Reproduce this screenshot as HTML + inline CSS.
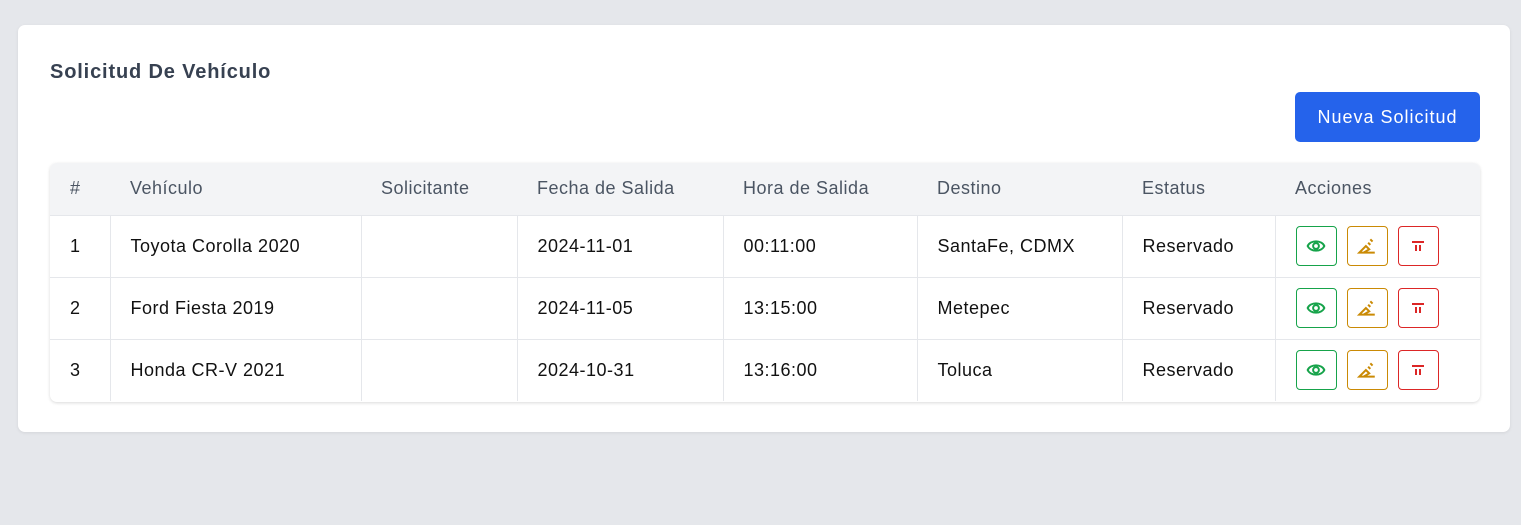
<!DOCTYPE html>
<html><head><style>
*{box-sizing:border-box;margin:0;padding:0}
body{width:1521px;height:525px;background:#e5e7eb;font-family:"Liberation Sans",sans-serif;position:relative;overflow:hidden}
.card{position:absolute;left:18px;top:25px;width:1492px;height:407px;background:#fff;border-radius:7px;box-shadow:0 1px 3px rgba(0,0,0,.08)}
h1{position:absolute;left:32px;top:36px;font-size:20px;font-weight:bold;color:#374151;letter-spacing:0.85px}
.btn{position:absolute;left:1277px;top:67px;width:185px;height:50px;background:#2563eb;color:#fff;border-radius:5px;font-size:18px;letter-spacing:1px;display:flex;align-items:center;justify-content:center}
.tw{position:absolute;left:32px;top:138px;width:1430px;height:239px;border-radius:7px;box-shadow:0 1px 3px rgba(0,0,0,.15);overflow:hidden}
table{border-collapse:collapse;width:100%;font-size:18px;color:#111;letter-spacing:0.5px}
th{background:#f3f4f6;height:52px;text-align:left;font-weight:normal;color:#4b5563;padding-left:20px;border-bottom:1px solid #e5e7eb}
td{height:62px;padding-left:20px;border-right:1px solid #e5e7eb;border-bottom:1px solid #e5e7eb}
td:last-child{border-right:none}
tr:last-child td{border-bottom:none}
.a{display:inline-flex;width:41px;height:40px;border:1px solid;border-radius:4px;margin-right:10px;align-items:center;justify-content:center;vertical-align:middle}
</style></head><body>
<div class="card">
<h1>Solicitud De Vehículo</h1>
<div class="btn">Nueva Solicitud</div>
<div class="tw"><table>
<colgroup><col style="width:60px"><col style="width:251px"><col style="width:156px"><col style="width:206px"><col style="width:194px"><col style="width:205px"><col style="width:153px"><col></colgroup>
<tr><th>#</th><th>Vehículo</th><th>Solicitante</th><th>Fecha de Salida</th><th>Hora de Salida</th><th>Destino</th><th>Estatus</th><th>Acciones</th></tr>
<tr><td>1</td><td>Toyota Corolla 2020</td><td></td><td>2024-11-01</td><td>00:11:00</td><td>SantaFe, CDMX</td><td>Reservado</td><td>ACT</td></tr>
<tr><td>2</td><td>Ford Fiesta 2019</td><td></td><td>2024-11-05</td><td>13:15:00</td><td>Metepec</td><td>Reservado</td><td>ACT</td></tr>
<tr><td>3</td><td>Honda CR-V 2021</td><td></td><td>2024-10-31</td><td>13:16:00</td><td>Toluca</td><td>Reservado</td><td>ACT</td></tr>
</table></div>
</div>
<script>
var a='<span class="a" style="border-color:#16a34a"><svg width="20" height="20" viewBox="0 0 18 18" fill="none" stroke="#16a34a" stroke-width="1.8"><path d="M1.5 9C4 3.5 14 3.5 16.5 9C14 14.5 4 14.5 1.5 9Z"/><circle cx="9" cy="9" r="2.6"/></svg></span><span class="a" style="border-color:#ca8a04"><svg width="20" height="20" viewBox="0 0 18 18" fill="none" stroke="#ca8a04" stroke-width="1.8"><path d="M2 15L8 9L11 12L6 15ZM2 15H16M12 3L14 5M10 6L12 8"/></svg></span><span class="a" style="border-color:#dc2626"><svg width="18" height="18" viewBox="0 0 18 18" fill="none" stroke="#dc2626" stroke-width="2"><path d="M3 5H15M7 8V14M11 8V14"/></svg></span>';
document.querySelectorAll('td').forEach(function(t){if(t.textContent=='ACT')t.innerHTML=a;});
</script>
</body></html>
